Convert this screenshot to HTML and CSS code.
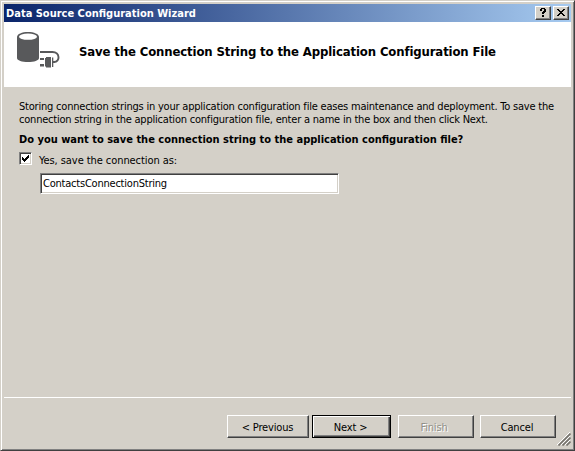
FILE: index.html
```html
<!DOCTYPE html>
<html lang="en">
<head>
<meta charset="utf-8">
<title>Data Source Configuration Wizard</title>
<link rel="stylesheet" href="styles.css">
</head>
<body>
<div class="window">
  <div class="titlebar">
    <span class="title">Data Source Configuration Wizard</span>
    <button class="cap" aria-label="Help"><svg width="14" height="12" viewBox="0 0 14 12" shape-rendering="crispEdges"><path d="M5 1h4v1h1v3H9v1H8v1H6V5h1V4h1V2H6v2H4V2h1zM6 8h2v2H6z"/></svg></button>
    <button class="cap" aria-label="Close"><svg width="14" height="12" viewBox="0 0 14 12" shape-rendering="crispEdges"><path d="M3 2h2v1h1v1h2V3h1V2h2v1h-1v1H9v1H8v1h1v1h1v1h1v1H9V8H8V7H6v1H5v1H3V8h1V7h1V6h1V5H5V4H4V3H3z"/></svg></button>
  </div>
  <header class="header">
    <svg class="logo" width="44" height="38" viewBox="0 0 44 38">
      <path fill="#58595b" d="M1 5C1 2 6 0 12 0s11 2 11 5v21c0 2.500-5 4-11 4S1 28.500 1 26z"/>
      <ellipse cx="12" cy="4.700" rx="9" ry="3.100" fill="#fff"/>
      <path fill="none" stroke="#58595b" stroke-width="1.900" d="M24 20h12.500c7.500 0 8 10 1.500 10"/>
      <path fill="#58595b" d="M24 26h4v2h-4zM24 32h4v2.500h-4zM29 26h1v-1h5v10.500h-5v-1h-1zM36 25.500h1.300v9.500H36zM37 29h2v2h-2z"/>
    </svg>
    <h1 class="heading">Save the Connection String to the Application Configuration File</h1>
  </header>
  <main class="content">
    <p class="intro"><span class="line1">Storing connection strings in your application configuration file eases maintenance and deployment. To save the</span><br><span class="line2">connection string in the application configuration file, enter a name in the box and then click Next.</span></p>
    <p class="question">Do you want to save the connection string to the application configuration file?</p>
    <label class="option"><span class="check"><svg width="9" height="9" viewBox="0 0 9 9" shape-rendering="crispEdges"><path d="M1 3h1v1h1v1h1V4h1V3h1V2h1V1h1v3H7v1H6v1H5v1H4v1H3V7H2V6H1z"/></svg></span><span class="option-text">Yes, save the connection as:</span></label>
    <div class="field"><span class="value">ContactsConnectionString</span></div>
  </main>
  <footer class="footer">
    <button class="btn previous"><span>&lt; Previous</span></button>
    <button class="btn next"><span>Next &gt;</span></button>
    <button class="btn finish" disabled><span>Finish</span></button>
    <button class="btn cancel"><span>Cancel</span></button>
    <svg class="grip" width="14" height="14" viewBox="0 0 14 14"><path stroke="#fff" stroke-width="1" d="M0 13L13 0M4 13l9-9M8 13l5-5"/><path stroke="#77746e" stroke-width="1.700" d="M1.500 13.500l12-12M5.500 13.500l8-8M9.500 13.500l4-4"/></svg>
  </footer>
</div>
</body>
</html>
```

FILE: styles.css
```css
* { box-sizing: border-box; }
body, p, h1 { margin: 0; }
body {
  width: 575px;
  height: 451px;
  overflow: hidden;
  background: #d4d0c8;
  color: #000;
  font: 11px/13px "DejaVu Sans Condensed", "DejaVu Sans", sans-serif;
  font-stretch: condensed;
  white-space: nowrap;
}
.window {
  width: 575px;
  height: 451px;
  display: flex;
  flex-direction: column;
  border: 1px solid #d4d0c8;
  border-right-color: #404040;
  border-bottom-color: #404040;
  box-shadow: inset 1px 1px #fff, inset -1px -1px #808080;
  padding: 3px;
}
.titlebar {
  height: 18px;
  display: flex;
  align-items: center;
  gap: 2px;
  padding: 0 2px;
  background: linear-gradient(90deg, #0a246a, #a6caf0);
}
.title {
  flex: 1;
  color: #fff;
  font-weight: bold;
}
.cap {
  width: 16px;
  height: 14px;
  padding: 0;
  border: 1px solid #fff;
  border-right-color: #404040;
  border-bottom-color: #404040;
  background: #d4d0c8;
  box-shadow: inset -1px -1px #808080;
}
.cap svg { display: block; }
.header {
  height: 65px;
  display: flex;
  align-items: flex-start;
  padding: 10px 12px 0;
  background: #fff;
}
.heading {
  margin: 12px 0 0 19px;
  font-size: 13px;
  line-height: 15px;
  letter-spacing: -0.13px;
}
.content {
  flex: 1;
  padding: 13px 15px 0;
}
.line1 { letter-spacing: -0.21px; }
.line2 { letter-spacing: -0.21px; }
.question {
  margin-top: 7px;
  font-weight: bold;
}
.option {
  display: flex;
  margin-top: 6px;
  height: 15px;
}
.check {
  width: 13px;
  height: 13px;
  padding: 1px;
  background: #fff;
  border: 1px solid #808080;
  border-right-color: #fff;
  border-bottom-color: #fff;
  box-shadow: inset 1px 1px #404040, inset -1px -1px #d4d0c8;
}
.check svg { display: block; }
.option-text { margin: 2px 0 0 7px; letter-spacing: -0.07px; }
.field {
  width: 299px;
  height: 21px;
  margin: 6px 0 0 21px;
  padding: 3px 2px 0;
  background: #fff;
  border: 1px solid #808080;
  border-right-color: #fff;
  border-bottom-color: #fff;
  box-shadow: inset 1px 1px #404040, inset -1px -1px #d4d0c8;
}
.value { letter-spacing: -0.22px; }
.footer {
  position: relative;
  height: 50px;
  display: flex;
  align-items: flex-start;
  padding: 17px 0 0 223px;
  border-top: 1px solid #fff;
}
.btn {
  width: 76px;
  height: 23px;
  padding: 1px 1px 0 0;
  border: 1px solid #fff;
  border-right-color: #404040;
  border-bottom-color: #404040;
  background: #d4d0c8;
  box-shadow: inset -1px -1px #808080;
  color: #000;
  font: inherit;
  letter-spacing: -0.15px;
}
.previous { width: 82px; margin-right: 3px; }
.next {
  width: 79px;
  margin-right: 7px;
  padding-right: 2px;
  border-color: #000;
  box-shadow: inset 1px 1px #fff, inset -1px -1px #404040, inset -2px -2px #808080;
}
.finish { margin-right: 6px; padding-right: 4px; color: #929088; text-shadow: 1px 1px #fff; }
.cancel { padding-right: 2px; }
.grip { position: absolute; right: 0; bottom: 1px; }
```
